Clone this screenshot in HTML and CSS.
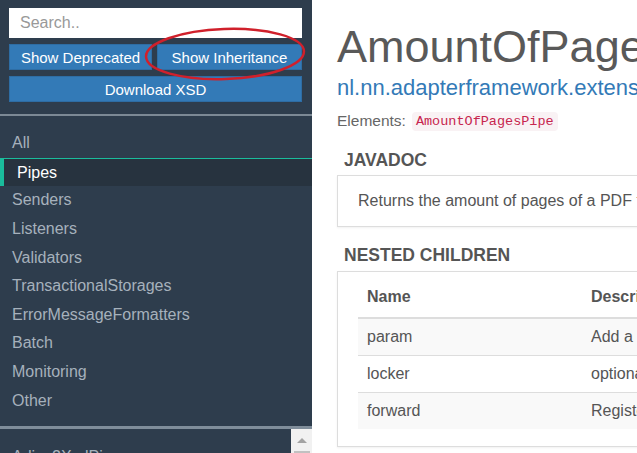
FILE: index.html
```html
<!DOCTYPE html>
<html>
<head>
<meta charset="utf-8">
<link rel="stylesheet" href="styles.css">
</head>
<body>
<div class="page">
  <aside class="sidebar">
    <div class="controls">
      <input class="search" type="text" placeholder="Search..">
      <div class="btn-row">
        <button class="btn">Show Deprecated</button>
        <button class="btn">Show Inheritance</button>
      </div>
      <button class="btn btn-wide">Download XSD</button>
      <svg class="annotation" width="170" height="60" viewBox="0 0 170 60">
        <ellipse cx="85" cy="29" rx="79" ry="25" fill="none" stroke="#d0202b" stroke-width="2.5" transform="rotate(-2 85 29)"/>
      </svg>
    </div>
    <ul class="nav">
      <li class="nav-item">All</li>
      <li class="nav-item active">Pipes</li>
      <li class="nav-item">Senders</li>
      <li class="nav-item">Listeners</li>
      <li class="nav-item">Validators</li>
      <li class="nav-item">TransactionalStorages</li>
      <li class="nav-item">ErrorMessageFormatters</li>
      <li class="nav-item">Batch</li>
      <li class="nav-item">Monitoring</li>
      <li class="nav-item">Other</li>
    </ul>
    <div class="list">
      <div class="list-items">
        <div class="list-item">Adios2XmlPipe</div>
      </div>
      <div class="scrollbar">
        <div class="arrow"></div>
        <div class="thumb"></div>
      </div>
    </div>
  </aside>
  <main class="main">
    <div class="content">
      <h1 class="title">AmountOfPagesPipe</h1>
      <a class="pkg" href="#">nl.nn.adapterframework.extensions.aspose.pipe.AmountOfPagesPipe</a>
      <div class="elements">Elements: <code class="code">AmountOfPagesPipe</code></div>
      <h2 class="heading">JAVADOC</h2>
      <div class="panel panel-text">Returns the amount of pages of a PDF file.</div>
      <h2 class="heading heading-2">NESTED CHILDREN</h2>
      <div class="panel panel-table">
        <table class="table">
          <thead>
            <tr><th class="col-name">Name</th><th>Description</th></tr>
          </thead>
          <tbody>
            <tr class="odd"><td>param</td><td>Add a parameter to be used in the pipe</td></tr>
            <tr><td>locker</td><td>optional Locker, to avoid parallel execution</td></tr>
            <tr class="odd"><td>forward</td><td>Register a PipeForward object to this pipe</td></tr>
          </tbody>
        </table>
      </div>
    </div>
  </main>
</div>
</body>
</html>
```

FILE: styles.css
```css
* { box-sizing: border-box; }
html, body { margin: 0; padding: 0; }
body {
  font-family: "Liberation Sans", Arial, sans-serif;
  background: #fff;
  width: 637px;
  height: 453px;
  overflow: hidden;
}
.page {
  display: flex;
  height: 453px;
  overflow: hidden;
}
.sidebar {
  width: 312px;
  flex-shrink: 0;
  background: #2e3d4d;
  display: flex;
  flex-direction: column;
}
.controls {
  position: relative;
  padding: 8px 10px 12px 9px;
  display: flex;
  flex-direction: column;
  gap: 6px;
  border-bottom: 2px solid #7c8995;
}
.search {
  height: 30px;
  border: none;
  outline: none;
  background: #fff;
  font-family: "Liberation Sans", Arial, sans-serif;
  font-size: 16px;
  padding: 0 11px;
  color: #555;
  margin: 0;
}
.search::placeholder { color: #999; }
.btn-row {
  display: grid;
  grid-template-columns: 143px 145px;
  gap: 5px;
}
.btn {
  height: 26px;
  margin: 0;
  border: 1px solid #2e6da4;
  background: #337ab7;
  color: #fff;
  font-family: "Liberation Sans", Arial, sans-serif;
  font-size: 15px;
  padding: 0;
  border-radius: 0;
}
.annotation {
  position: absolute;
  left: 140px;
  top: 25px;
}
.nav {
  list-style: none;
  margin: 0;
  padding: 13px 0 11px 0;
  border-bottom: 3px solid #7f8d9a;
}
.nav-item {
  height: 28.6px;
  display: flex;
  align-items: center;
  padding-left: 12px;
  font-size: 16px;
  color: #a6b1bc;
}
.nav-item.active {
  background: #27333f;
  color: #fff;
  border-top: 1px solid #1abc9c;
  border-left: 4px solid #1abc9c;
  padding-left: 13px;
  padding-top: 1px;
}
.list {
  flex: 1;
  display: flex;
  overflow: hidden;
}
.list-items {
  flex: 1;
  padding-top: 14px;
}
.list-item {
  font-size: 16px;
  color: #a6b1bc;
  padding-left: 12px;
  line-height: 28px;
}
.scrollbar {
  width: 21px;
  background: #f1f1f1;
  display: flex;
  flex-direction: column;
  align-items: center;
}
.arrow {
  margin-top: 9px;
  width: 0;
  height: 0;
  border-left: 5px solid transparent;
  border-right: 5px solid transparent;
  border-bottom: 5px solid #a3a3a3;
}
.thumb {
  margin-top: 8px;
  width: 16px;
  height: 40px;
  background: #c1c1c1;
}
.main {
  flex: 1;
  min-width: 0;
  overflow: hidden;
}
.content {
  width: 800px;
  padding: 20px 0 0 25px;
}
.title {
  margin: 0;
  font-size: 45px;
  line-height: 54px;
  font-weight: normal;
  color: #595959;
  white-space: nowrap;
}
.pkg {
  display: block;
  font-size: 22px;
  line-height: 26px;
  color: #337ab7;
  text-decoration: none;
  margin-top: 1px;
  white-space: nowrap;
}
.elements {
  display: flex;
  align-items: center;
  gap: 6px;
  height: 20px;
  margin-top: 10px;
  font-size: 15.5px;
  color: #666;
}
.code {
  font-family: "Liberation Mono", "Courier New", monospace;
  font-size: 13.5px;
  color: #c7254e;
  background: #f9f2f4;
  border-radius: 4px;
  padding: 1px 4px;
  line-height: 17px;
}
.heading {
  margin: 19px 0 5px 7px;
  font-size: 17.5px;
  line-height: 20px;
  font-weight: bold;
  color: #555;
}
.heading-2 {
  margin-top: 18px;
  margin-bottom: 6px;
}
.panel {
  border: 1px solid #ddd;
  box-shadow: 0 1px 2px rgba(0, 0, 0, 0.06);
  background: #fff;
}
.panel-text {
  padding: 14px 20px;
  font-size: 16px;
  line-height: 22px;
  color: #555;
  white-space: nowrap;
}
.panel-table {
  padding: 5px 20px 17px 20px;
}
.table {
  border-collapse: collapse;
  width: 100%;
  font-size: 16px;
  color: #555;
}
.table th {
  text-align: left;
  font-weight: bold;
  padding: 9px 10px 9px 9px;
  line-height: 22px;
  border-bottom: 2px solid #ddd;
  white-space: nowrap;
}
.table .col-name { width: 224px; }
.table td {
  padding: 7px 10px 7px 9px;
  line-height: 22px;
  border-top: 1px solid #ddd;
  white-space: nowrap;
}
.table tbody tr:first-child td { border-top: none; }
.table tr.odd td { background: #f9f9f9; }
```
